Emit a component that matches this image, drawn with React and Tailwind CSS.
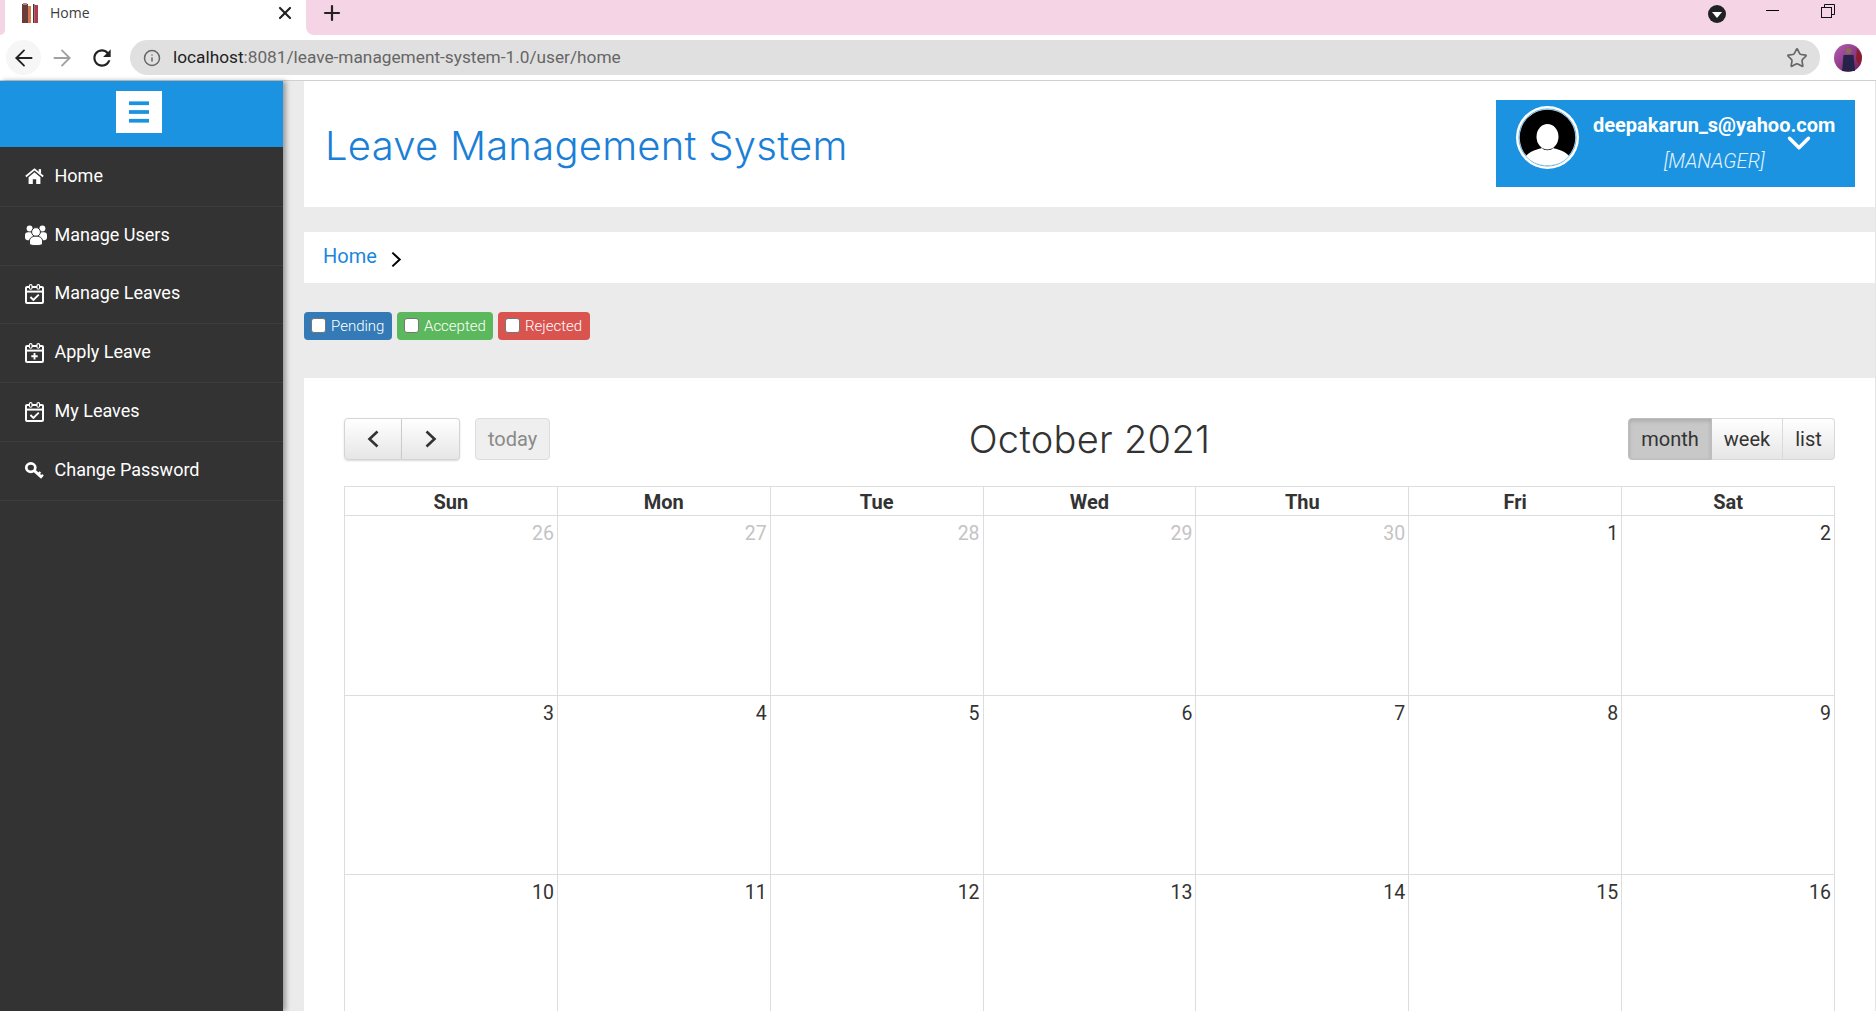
import { ArrowLeft, ArrowRight, Info, Star, X, Plus, Menu, ChevronDown } from 'lucide-react';

function HomeIcon() {
  return (
    <svg width="19" height="16" viewBox="0 0 18 15" fill="white">
      <path d="M0.8 8 L9 1.2 L17.2 8" fill="none" stroke="white" strokeWidth="1.7" />
      <rect x="13" y="1" width="2.2" height="4" />
      <path d="M3.4 8.6 L9 4 L14.6 8.6 V15 H10.6 V10.6 H7.4 V15 H3.4 Z" />
    </svg>
  );
}

function UsersIcon() {
  return (
    <svg width="22" height="21" viewBox="0 0 22 21" fill="white">
      <circle cx="4.6" cy="3.4" r="3" />
      <circle cx="17.4" cy="3.4" r="3" />
      <rect x="0" y="7.2" width="8" height="8" rx="3" />
      <rect x="14" y="7.2" width="8" height="8" rx="3" />
      <circle cx="11" cy="7" r="4.4" stroke="#333333" strokeWidth="1" />
      <path d="M4.5 19.5 V16 C4.5 13 7 11.2 11 11.2 C15 11.2 17.5 13 17.5 16 V19.5 C15 21 7 21 4.5 19.5 Z" stroke="#333333" strokeWidth="1" />
    </svg>
  );
}

function CalendarIcon({ plus }) {
  return (
    <svg width="19" height="20" viewBox="0 0 19 20" fill="none" stroke="white">
      <rect x="1" y="3" width="17" height="16" rx="1" strokeWidth="2" />
      <path d="M1 7.6 H18" strokeWidth="2" />
      <rect x="4.4" y="0.6" width="2.6" height="4.6" rx="1.2" fill="#333333" strokeWidth="1.1" />
      <rect x="12" y="0.6" width="2.6" height="4.6" rx="1.2" fill="#333333" strokeWidth="1.1" />
      {plus ? (
        <path d="M9.5 10 V16.4 M6.3 13.2 H12.7" strokeWidth="1.9" />
      ) : (
        <path d="M5.4 13 L8.4 16 L13.8 10.6" strokeWidth="1.9" />
      )}
    </svg>
  );
}

function KeyIcon() {
  return (
    <svg width="19" height="17" viewBox="0 0 19 17" fill="none" stroke="white">
      <ellipse cx="5.8" cy="5.6" rx="4.5" ry="4.2" strokeWidth="2.7" />
      <path d="M9 8.4 L17 15.6" strokeWidth="2.8" />
      <path d="M13.2 12.2 L15.4 10 M16 14.8 L18 12.8" strokeWidth="2.2" />
    </svg>
  );
}

function Chevron({ left, width, height, stroke, color }) {
  return (
    <svg width={width} height={height} viewBox="0 0 12 18" fill="none" stroke={color} strokeWidth={stroke}>
      <path d={left ? 'M10.5 1.5 L2.5 9 L10.5 16.5' : 'M1.5 1.5 L9.5 9 L1.5 16.5'} />
    </svg>
  );
}

const navItems = [
  { label: 'Home', icon: <HomeIcon /> },
  { label: 'Manage Users', icon: <UsersIcon /> },
  { label: 'Manage Leaves', icon: <CalendarIcon /> },
  { label: 'Apply Leave', icon: <CalendarIcon plus /> },
  { label: 'My Leaves', icon: <CalendarIcon /> },
  { label: 'Change Password', icon: <KeyIcon /> },
];

const days = ['Sun', 'Mon', 'Tue', 'Wed', 'Thu', 'Fri', 'Sat'];

const weeks = [
  [26, 27, 28, 29, 30, 1, 2],
  [3, 4, 5, 6, 7, 8, 9],
  [10, 11, 12, 13, 14, 15, 16],
];

function BrowserChrome() {
  return (
    <div className="h-[81px] shrink-0 border-b border-[#d0d0d0] bg-white">
      {/* Tab strip */}
      <div className="flex h-[35px] bg-white">
        <div className="w-[5px] rounded-br-lg bg-[#f5d5e5]" />
        <div className="flex w-[301px] items-center pb-[9px] pl-[17px] pr-[11px]">
          <svg width="16" height="20" viewBox="0 0 16 20">
            <rect x="0" y="1" width="6" height="19" fill="#6a3b3b" />
            <rect x="1" y="0" width="4" height="2" fill="#a88" />
            <rect x="6" y="3" width="3" height="17" fill="#d0774c" />
            <rect x="11" y="1" width="1.5" height="19" fill="#3a3a3a" />
            <rect x="12.5" y="2" width="3.5" height="18" fill="#b13a4e" />
          </svg>
          <span className="-mt-[2px] ml-[12px] font-['Open_Sans'] text-[14px] text-[#3c3c3c]">Home</span>
          <X size={20} strokeWidth={2.6} className="ml-auto text-[#222222]" />
        </div>
        <div className="flex flex-1 items-start rounded-bl-lg bg-[#f5d5e5]">
          <Plus size={24} strokeWidth={2.2} className="ml-[14px] mt-[1px] text-[#222222]" />
          <div className="ml-auto mt-[5px] flex h-[18px] w-[18px] items-center justify-center rounded-full bg-[#202124]">
            <div className="mt-[1px] h-0 w-0 border-x-[5px] border-t-[6px] border-x-transparent border-t-white" />
          </div>
          <div className="ml-[40px] mt-[10px] h-px w-[13px] bg-black" />
          <svg width="14" height="14" viewBox="0 0 14 14" className="ml-[42px] mr-[41px] mt-[4px]" fill="none" stroke="#111" strokeWidth="1">
            <rect x="0.5" y="3.5" width="10" height="10" />
            <path d="M3.5 3V0.5H13.5V10.5H11" />
          </svg>
        </div>
      </div>
      {/* Address bar */}
      <div className="flex h-[45px] items-center pl-[6px]">
        <div className="flex h-[35px] w-[35px] items-center justify-center rounded-full bg-[#f6f6f6]">
          <ArrowLeft size={26} strokeWidth={1.7} className="text-[#222222]" />
        </div>
        <ArrowRight size={26} strokeWidth={1.7} className="ml-[8px] text-[#a0a0a0]" />
        <svg width="26" height="26" viewBox="0 0 24 24" fill="#222222" className="ml-[14px]">
          <path d="M17.65 6.35C16.2 4.9 14.21 4 12 4c-4.42 0-7.99 3.58-7.99 8s3.57 8 7.99 8c3.73 0 6.84-2.55 7.73-6h-2.08c-.82 2.33-3.04 4-5.65 4-3.31 0-6-2.69-6-6s2.69-6 6-6c1.66 0 3.14.69 4.22 1.78L13 11h7V4l-2.35 2.35z" />
        </svg>
        <div className="ml-[15px] flex h-[35px] w-[1690px] items-center rounded-full bg-[#e0e0e0] pl-[13px] pr-[12px]">
          <Info size={18} className="text-[#666666]" />
          <span className="ml-[12px] text-[17.25px] text-[#666666]">
            <span className="text-[#222222]">localhost</span>:8081/leave-management-system-1.0/user/home
          </span>
          <Star size={22} strokeWidth={1.8} className="ml-auto text-[#666666]" />
        </div>
        <svg width="28" height="28" viewBox="0 0 28 28" className="ml-[14px]">
          <defs>
            <linearGradient id="pf" x1="0" y1="0" x2="1" y2="1">
              <stop offset="0" stopColor="#b55cb5" />
              <stop offset="1" stopColor="#6a1f5a" />
            </linearGradient>
          </defs>
          <circle cx="14" cy="14" r="14" fill="url(#pf)" />
          <circle cx="14.5" cy="7" r="3" fill="#8a6a5a" />
          <path d="M8 27 L9.5 11 H19.5 L21 27 Z" fill="#25234a" />
          <path d="M23 4 L28 12 L26 22 L22 16 Z" fill="#8c1d2c" />
        </svg>
      </div>
    </div>
  );
}

function Sidebar() {
  return (
    <aside className="z-10 flex w-[283px] shrink-0 flex-col bg-[#333333] shadow-[3px_0_5px_rgba(0,0,0,0.35)]">
      <div className="flex h-[66px] shrink-0 items-start justify-center bg-[#1b93e1] pr-[5px] pt-[10px]">
        <div className="flex h-[42px] w-[46px] items-center justify-center bg-white">
          <Menu size={30} strokeWidth={3} strokeLinecap="butt" className="text-[#1b93e1]" />
        </div>
      </div>
      <div className="mt-[1px]">
        {navItems.map((item) => (
          <div key={item.label} className="flex h-[58.8px] items-center border-b border-[#3d3d3d] pb-[1px] pl-[25px] text-white">
            <span className="flex w-[22px] justify-start">{item.icon}</span>
            <span className="-mt-[2px] ml-[7.5px] text-[18px]">{item.label}</span>
          </div>
        ))}
      </div>
    </aside>
  );
}

function Header() {
  return (
    <header className="flex h-[126px] shrink-0 items-center justify-between bg-white pl-[21px] pr-[20px]">
      <h1 className="pt-[4px] font-['Inter'] text-[40px] font-light tracking-[0.25px] text-[#1b7fd8]">Leave Management System</h1>
      <div className="relative mb-[1px] flex h-[87px] w-[359px] items-start bg-[#1b93e1] pl-[20px] text-white">
        <svg width="63" height="63" viewBox="0 0 63 63" className="mt-[6px]">
          <circle cx="31.5" cy="31.5" r="31.5" fill="#fff" />
          <circle cx="31.5" cy="31.5" r="28.6" fill="none" stroke="#1b93e1" strokeWidth="0.7" />
          <circle cx="31.5" cy="31.5" r="27.8" fill="#000" />
          <ellipse cx="31.5" cy="30.7" rx="11" ry="12.7" fill="#fff" />
          <path d="M10 50 C14 45 22 43 26 42 C28 45 35 45 37 42 C41 43 49 45 53 50 C48 56 40 59.3 31.5 59.3 C23 59.3 15 56 10 50 Z" fill="#fff" />
        </svg>
        <div className="ml-[14px] flex flex-col items-center pt-[12px]">
          <span className="text-[20px] font-bold leading-[26px]">deepakarun_s@yahoo.com</span>
          <span className="mt-[11px] text-[20px] font-light italic leading-[24px] text-[#e3f2fd]">[MANAGER]</span>
        </div>
        <ChevronDown size={38} strokeWidth={2.2} className="absolute left-[284px] top-[24px]" />
      </div>
    </header>
  );
}

function Filters() {
  const filters = [
    { label: 'Pending', cls: 'w-[88px] bg-[#337ab7]' },
    { label: 'Accepted', cls: 'w-[96px] bg-[#5cb85c]' },
    { label: 'Rejected', cls: 'w-[92px] bg-[#d9534f]' },
  ];
  return (
    <div className="mt-[29px] flex gap-[5px]">
      {filters.map((f) => (
        <div key={f.label} className={`flex h-[28px] items-center rounded-[4px] pl-[7px] text-[15px] font-light text-white ${f.cls}`}>
          <span className="-mt-[2px] h-[15px] w-[15px] rounded-[3px] border-[1.5px] border-[#767676] bg-white" />
          <span className="ml-[5px]">{f.label}</span>
        </div>
      ))}
    </div>
  );
}

function Calendar() {
  const navBtn = 'flex h-[42px] items-center justify-center border border-[#d4d4d4] bg-gradient-to-b from-white to-[#e6e6e6] shadow-[0_1px_2px_rgba(0,0,0,0.15)]';
  return (
    <section className="mt-[38px] flex-1 overflow-hidden bg-white pl-[40px] pr-[40px] pt-[40px]">
      <div className="flex h-[42px] items-center justify-between">
        <div className="flex w-[400px]">
          <button className={`${navBtn} w-[58px] rounded-l-[4px]`}>
            <Chevron left width={12} height={18} stroke={2.6} color="#333333" />
          </button>
          <button className={`${navBtn} w-[58px] rounded-r-[4px] border-l-0`}>
            <Chevron width={12} height={18} stroke={2.6} color="#333333" />
          </button>
          <button className="ml-[15px] h-[42px] w-[75px] rounded-[4px] border border-[#dcdcdc] bg-[#efefef] text-[20px] text-[#8a8a8a]">
            today
          </button>
        </div>
        <h2 className="font-['Inter'] text-[38px] font-light tracking-[0.3px] text-[#333333]">October 2021</h2>
        <div className="flex w-[400px] justify-end text-[20px] text-[#333333]">
          <button className="h-[42px] w-[84px] rounded-l-[4px] border border-[#bdbdbd] bg-[#c8c8c8] shadow-[inset_0_2px_4px_rgba(0,0,0,0.15)]">month</button>
          <button className="h-[42px] w-[71px] border-y border-r border-[#d9d9d9] bg-gradient-to-b from-white to-[#e6e6e6]">week</button>
          <button className="h-[42px] w-[52px] rounded-r-[4px] border-y border-r border-[#d9d9d9] bg-gradient-to-b from-white to-[#e6e6e6]">list</button>
        </div>
      </div>
      <div className="mt-[26px] border-l border-t border-[#dddddd]">
        <div className="grid h-[29px] grid-cols-7 border-b border-[#dddddd]">
          {days.map((d) => (
            <div key={d} className="flex items-center justify-center border-r border-[#dddddd] text-[20px] font-bold text-[#333333]">
              {d}
            </div>
          ))}
        </div>
        {weeks.map((week, w) => (
          <div key={w} className={`grid grid-cols-7 border-b border-[#dddddd] ${w === 0 ? 'h-[180px]' : 'h-[179px]'}`}>
            {week.map((n, i) => (
              <div
                key={i}
                className={`border-r border-[#dddddd] pr-[3px] pt-[3px] text-right text-[19.5px] ${w === 0 && n > 20 ? 'text-[#c4c4c4]' : 'text-[#333333]'}`}
              >
                {n}
              </div>
            ))}
          </div>
        ))}
      </div>
    </section>
  );
}

export default function App() {
  return (
    <div className="flex h-[1011px] w-[1876px] flex-col overflow-hidden bg-[#ebebeb] font-['Roboto',sans-serif]">
      <BrowserChrome />
      <div className="flex min-h-0 flex-1">
        <Sidebar />
        <main className="ml-[21px] flex min-w-0 flex-1 flex-col border-r border-[#e5e5e5]">
          <Header />
          <div className="mt-[25px] flex h-[51px] shrink-0 items-center bg-white pl-[19px]">
            <span className="-mt-[3px] text-[20px] text-[#1b86e0]">Home</span>
            <span className="ml-[14px] mt-[4px] flex">
              <Chevron width={11} height={17} stroke={2.2} color="#000000" />
            </span>
          </div>
          <Filters />
          <Calendar />
        </main>
      </div>
    </div>
  );
}
